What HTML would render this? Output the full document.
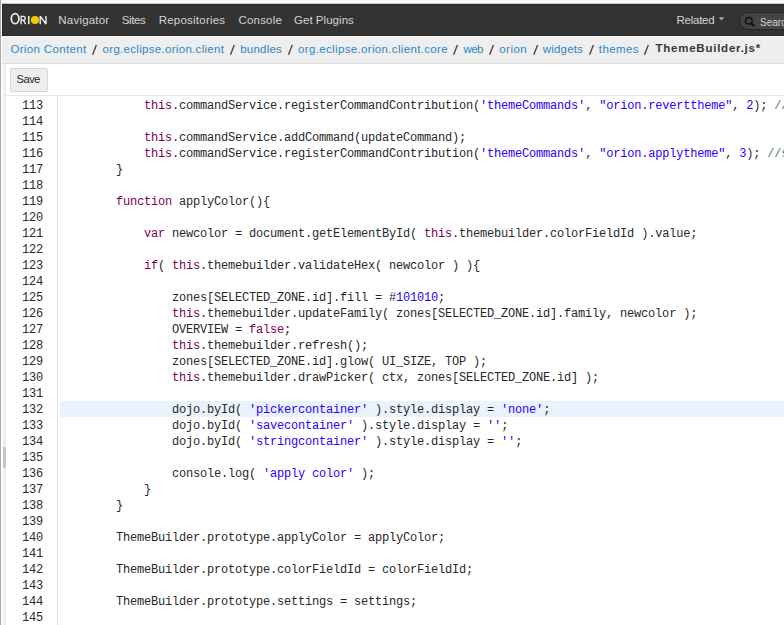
<!DOCTYPE html>
<html><head><meta charset="utf-8">
<style>
html,body{margin:0;padding:0;}
body{width:784px;height:625px;overflow:hidden;position:relative;background:#f7f7f7;font-family:"Liberation Sans",sans-serif;}
.abs{position:absolute;}
#lframe{left:0;top:0;width:1px;height:625px;background:#aaa;}
#lframe2{left:1px;top:0;width:1px;height:625px;background:#fff;}
#top3{left:2px;top:3px;width:782px;height:1px;background:#c9cdd3;}
#header{left:2px;top:4px;width:790px;height:30px;background:#333;border:1px solid #262626;}
#hl{left:2px;top:36px;width:782px;height:1px;background:#fafafa;}
#crumb{left:2px;top:37px;width:782px;height:26px;background:#eee;}
#crumbb{left:2px;top:63px;width:782px;height:1px;background:#ddd;}
#toolbar{left:2px;top:64px;width:782px;height:31px;background:#fff;}
#toolb{left:6px;top:95px;width:778px;height:1px;background:#e6e6e6;}
#editor{left:2px;top:96px;width:782px;height:529px;background:#fff;overflow:hidden;}
#split{left:3px;top:64px;width:3px;height:561px;background:#efefef;}
#splith{left:3px;top:447px;width:3px;height:21px;background:#c8c8c8;}
#gutb{left:57px;top:96px;width:1px;height:529px;background:#e4e4e4;}
#curline{left:60px;top:401px;width:724px;height:16px;background:#eaf2fe;}
.nav{position:absolute;top:9px;font-size:12px;color:#c8c8c8;line-height:20px;white-space:nowrap;}
.bc{position:absolute;top:40px;font-size:12px;color:#2d86c4;line-height:20px;white-space:nowrap;}
.sl{position:absolute;top:40px;font-size:12px;color:#333;line-height:20px;font-weight:bold;}
#nums{position:absolute;left:22px;top:98px;width:21px;text-align:right;font-family:"Liberation Mono",monospace;font-size:12px;letter-spacing:-0.2px;line-height:16px;color:#2a2a2a;}
#code{position:absolute;left:60px;top:98px;font-family:"Liberation Mono",monospace;font-size:12px;letter-spacing:-0.2px;line-height:16px;color:#282828;}
#code div{height:16px;white-space:pre;}
.t{position:absolute;line-height:12px;white-space:nowrap;}
.k{color:#7f0055;}
.str{color:#2a00ff;}
.n{color:#2a00ff;}
.c{color:#3f7f5f;}
#save{left:10px;top:68px;width:36px;height:22px;border:1px solid #d6d6d6;border-radius:1.5px;background:#eee;}
#savet{position:absolute;left:16px;top:70px;font-size:12px;line-height:20px;color:#222;}
#search{left:739px;top:12px;width:80px;height:16px;border:1px solid #222;border-radius:9px;background:#444;}
</style></head><body>
<div class="abs" id="lframe"></div>
<div class="abs" id="lframe2"></div>
<div class="abs" id="top3"></div>
<div class="abs" id="header"></div>
<div class="abs" id="hl"></div>
<div class="abs" id="crumb"></div>
<div class="abs" id="crumbb"></div>
<div class="abs" id="toolbar"></div>
<div class="abs" id="toolb"></div>
<div class="abs" id="editor"></div>
<div class="abs" id="split"></div>
<div class="abs" id="splith"></div>
<div class="abs" id="gutb"></div>
<div class="abs" id="curline"></div>

<!-- logo -->
<svg class="abs" style="left:0;top:0" width="60" height="36" viewBox="0 0 60 36">
<ellipse cx="15.1" cy="18.7" rx="3.8" ry="5.0" fill="none" stroke="#f2f2f2" stroke-width="1.7"/>
<path d="M21.1 24.2 V16.4 H23.2 Q25.3 16.4 25.3 18.3 Q25.3 20.2 23.2 20.2 H21.1 M23.3 20.2 L25.7 24.2" fill="none" stroke="#f2f2f2" stroke-width="1.3"/>
<path d="M28.8 16 V24.2" stroke="#f2f2f2" stroke-width="1.5"/>
<circle cx="35" cy="20" r="4.1" fill="#f7c600"/>
<path d="M40.2 24.2 V16.2 L46 24 V16" fill="none" stroke="#f2f2f2" stroke-width="1.4" stroke-linejoin="bevel"/>
</svg>

<svg class="abs" style="left:718px;top:17px" width="8" height="5"><path d="M0.8 0.3 L6.2 0.3 L3.5 3.4 Z" fill="#b0b0b0"/></svg>

<div class="abs" id="search"></div>
<svg class="abs" style="left:744px;top:16px" width="12" height="12" viewBox="0 0 12 12">
<circle cx="4.8" cy="4.8" r="3.3" fill="none" stroke="#111" stroke-width="1.5"/>
<path d="M7.2 7.2 L10.5 10.5" stroke="#111" stroke-width="2"/>
</svg>


<div class="abs" id="save"></div>
<div class="t" style="left:58.34px;top:14.04px;font-size:11.5px;color:#d4d4d4;font-weight:normal;letter-spacing:0.200px">Navigator</div>
<div class="t" style="left:121.80px;top:14.04px;font-size:11.5px;color:#d4d4d4;font-weight:normal;letter-spacing:-0.400px">Sites</div>
<div class="t" style="left:158.72px;top:14.04px;font-size:11.5px;color:#d4d4d4;font-weight:normal;letter-spacing:0.225px">Repositories</div>
<div class="t" style="left:238.52px;top:14.04px;font-size:11.5px;color:#d4d4d4;font-weight:normal;letter-spacing:0.187px">Console</div>
<div class="t" style="left:293.98px;top:14.04px;font-size:11.5px;color:#d4d4d4;font-weight:normal;letter-spacing:0.040px">Get Plugins</div>
<div class="t" style="left:676.56px;top:14.04px;font-size:11.5px;color:#d4d4d4;font-weight:normal;letter-spacing:-0.267px">Related</div>
<div class="t" style="left:10.42px;top:43.04px;font-size:11.5px;color:#2d86c4;font-weight:normal;letter-spacing:0.340px">Orion Content</div>
<div class="t" style="left:102.56px;top:43.04px;font-size:11.5px;color:#2d86c4;font-weight:normal;letter-spacing:0.303px">org.eclipse.orion.client</div>
<div class="t" style="left:240.26px;top:43.04px;font-size:11.5px;color:#2d86c4;font-weight:normal;letter-spacing:0.200px">bundles</div>
<div class="t" style="left:298.08px;top:43.04px;font-size:11.5px;color:#2d86c4;font-weight:normal;letter-spacing:0.343px">org.eclipse.orion.client.core</div>
<div class="t" style="left:463.60px;top:43.04px;font-size:11.5px;color:#2d86c4;font-weight:normal;letter-spacing:-0.600px">web</div>
<div class="t" style="left:499.26px;top:43.04px;font-size:11.5px;color:#2d86c4;font-weight:normal;letter-spacing:0.460px">orion</div>
<div class="t" style="left:542.80px;top:43.04px;font-size:11.5px;color:#2d86c4;font-weight:normal;letter-spacing:0.173px">widgets</div>
<div class="t" style="left:598.80px;top:43.04px;font-size:11.5px;color:#2d86c4;font-weight:normal;letter-spacing:0.400px">themes</div>
<div class="t" style="left:655.52px;top:41.78px;font-size:11.5px;color:#363636;font-weight:bold;letter-spacing:0.757px">ThemeBuilder.js*</div>
<div class="t" style="left:16.44px;top:73.04px;font-size:11px;color:#1e1e1e;font-weight:normal;letter-spacing:-0.347px">Save</div>
<div class="abs" style="left:760px;top:16.6px;font-size:10px;line-height:11px;color:#d0d0d0;white-space:nowrap">Search</div>
<svg class="abs" style="left:0;top:40px" width="784" height="18"><line x1="96.40" y1="4.9" x2="92.60" y2="14.7" stroke="#444" stroke-width="1.35"/><line x1="234.30" y1="4.9" x2="230.50" y2="14.7" stroke="#444" stroke-width="1.35"/><line x1="292.30" y1="4.9" x2="288.50" y2="14.7" stroke="#444" stroke-width="1.35"/><line x1="457.40" y1="4.9" x2="453.60" y2="14.7" stroke="#444" stroke-width="1.35"/><line x1="493.40" y1="4.9" x2="489.60" y2="14.7" stroke="#444" stroke-width="1.35"/><line x1="537.60" y1="4.9" x2="533.80" y2="14.7" stroke="#444" stroke-width="1.35"/><line x1="593.40" y1="4.9" x2="589.60" y2="14.7" stroke="#444" stroke-width="1.35"/><line x1="648.30" y1="4.9" x2="644.50" y2="14.7" stroke="#444" stroke-width="1.35"/></svg>

<div id="nums">
<div>113</div>
<div>114</div>
<div>115</div>
<div>116</div>
<div>117</div>
<div>118</div>
<div>119</div>
<div>120</div>
<div>121</div>
<div>122</div>
<div>123</div>
<div>124</div>
<div>125</div>
<div>126</div>
<div>127</div>
<div>128</div>
<div>129</div>
<div>130</div>
<div>131</div>
<div>132</div>
<div>133</div>
<div>134</div>
<div>135</div>
<div>136</div>
<div>137</div>
<div>138</div>
<div>139</div>
<div>140</div>
<div>141</div>
<div>142</div>
<div>143</div>
<div>144</div>
<div>145</div>
</div>
<div id="code">
<div>            <span class="k">this</span>.commandService.registerCommandContribution(<span class="str">'themeCommands'</span>, <span class="str">"orion.reverttheme"</span>, <span class="n">2</span>); <span class="c">//revert</span></div>
<div></div>
<div>            <span class="k">this</span>.commandService.addCommand(updateCommand);</div>
<div>            <span class="k">this</span>.commandService.registerCommandContribution(<span class="str">'themeCommands'</span>, <span class="str">"orion.applytheme"</span>, <span class="n">3</span>); <span class="c">//save</span></div>
<div>        }</div>
<div></div>
<div>        <span class="k">function</span> applyColor(){</div>
<div></div>
<div>            <span class="k">var</span> newcolor = document.getElementById( <span class="k">this</span>.themebuilder.colorFieldId ).value;</div>
<div></div>
<div>            <span class="k">if</span>( <span class="k">this</span>.themebuilder.validateHex( newcolor ) ){</div>
<div></div>
<div>                zones[SELECTED_ZONE.id].fill = #<span class="n">101010</span>;</div>
<div>                <span class="k">this</span>.themebuilder.updateFamily( zones[SELECTED_ZONE.id].family, newcolor );</div>
<div>                OVERVIEW = <span class="k">false</span>;</div>
<div>                <span class="k">this</span>.themebuilder.refresh();</div>
<div>                zones[SELECTED_ZONE.id].glow( UI_SIZE, TOP );</div>
<div>                <span class="k">this</span>.themebuilder.drawPicker( ctx, zones[SELECTED_ZONE.id] );</div>
<div></div>
<div>                dojo.byId( <span class="str">'pickercontainer'</span> ).style.display = <span class="str">'none'</span>;</div>
<div>                dojo.byId( <span class="str">'savecontainer'</span> ).style.display = <span class="str">''</span>;</div>
<div>                dojo.byId( <span class="str">'stringcontainer'</span> ).style.display = <span class="str">''</span>;</div>
<div></div>
<div>                console.log( <span class="str">'apply color'</span> );</div>
<div>            }</div>
<div>        }</div>
<div></div>
<div>        ThemeBuilder.prototype.applyColor = applyColor;</div>
<div></div>
<div>        ThemeBuilder.prototype.colorFieldId = colorFieldId;</div>
<div></div>
<div>        ThemeBuilder.prototype.settings = settings;</div>
<div></div>
</div>
</body></html>
